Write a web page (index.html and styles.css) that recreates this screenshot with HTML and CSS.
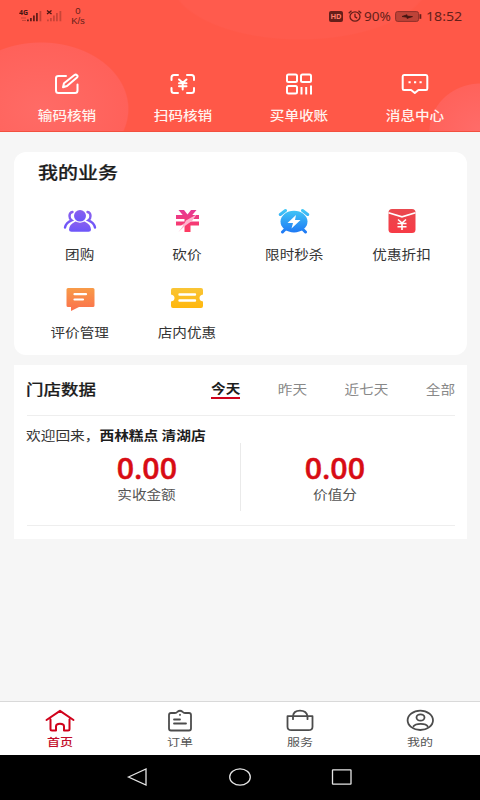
FILE: index.html
```html
<!DOCTYPE html>
<html lang="zh-CN">
<head>
<meta charset="utf-8">
<title>首页</title>
<link rel="stylesheet" href="styles.css">
</head>
<body>
<div class="app">
  <header class="hero">
    <div class="status">
      <svg class="signal" width="44" height="16" viewBox="0 0 44 16">
        <g fill="#651f1a"><path d="M8 11.500h1.800v1.800H8zM11 10h1.800v3.300H11zM14 7.500h1.800v5.800H14zM17 5h1.800v8.300H17z"/><path d="M20.500 3h1.800v10.300h-1.800z" opacity=".4"/></g>
        <g fill="#651f1a" opacity=".35"><path d="M28 11.500h1.800v1.800H28zM31 10h1.800v3.300H31zM34 7.500h1.800v5.800H34zM37 5h1.800v8.300H37zM40.500 3h1.800v10.300h-1.800zM2 9.500h5v1H2zM3 12h4v1H3z"/></g>
        <path d="m28 2.500 4.500 3.500m0-3.500-4.500 3.500" stroke="#451512" stroke-width="1.300"/>
        <text x="0" y="7" class="net">4G</text>
      </svg>
      <div class="speed"><span>0</span><span>K/s</span></div>
      <div class="status-right">
        <span class="hd">HD</span>
        <svg width="14" height="12" viewBox="0 0 14 12" fill="none" stroke="#651f1a" stroke-width="1.300"><ellipse cx="7" cy="6.500" rx="5" ry="4.600"/><path d="M.7 3.300 3.500.8M13.300 3.300 10.500.8M7 3.800v3l2.200 1.300"/></svg>
        <span class="stext pct">90%</span>
        <svg class="battery" width="27" height="11" viewBox="0 0 27 11"><rect x=".6" y=".6" width="23" height="9.800" rx="2" fill="#bd4338" stroke="#8f3029"/><path d="M24.500 3.200h1.800v4.600h-1.800z" fill="#651f1a"/><path d="M7 5.500 12 3.800v1.300l5.500.5-5.500 1.800V6.200z" fill="#451512" stroke="#451512" stroke-width=".8"/></svg>
        <span class="stext clock">18:52</span>
      </div>
    </div>
    <nav class="quick">
      <a><svg width="28" height="24" viewBox="0 0 28 24" fill="none" stroke="#fff" stroke-width="2" stroke-linecap="round" stroke-linejoin="round"><path d="M13 4H5.500Q3 4 3 6v12.500Q3 21 5.500 21H22q2.500 0 2.500-2.500V12.500M10 15.200l1-4L21.500 3q1.300-.8 2.500.2t0 2.300L14 14z"/></svg><span class="t">输码核销</span></a>
      <a><svg width="28" height="24" viewBox="0 0 28 24" fill="none" stroke="#fff" stroke-width="2" stroke-linecap="round" stroke-linejoin="round"><path d="M2.500 8V5.500Q2.500 3 5 3h4M18 3h4.500Q25 3 25 5.500V8M2.500 16v2.500Q2.500 21 5 21h4M18 21h4.500q2.500 0 2.500-2.500V16"/><path d="m10 7.500 3.700 3.200 3.800-3.200M10 11.200h7.500M10 14.200h7.500M13.700 11v6.500"/></svg><span class="t">扫码核销</span></a>
      <a><svg width="28" height="24" viewBox="0 0 28 24" fill="none" stroke="#fff" stroke-width="2"><rect x="2" y="2.500" width="10" height="7.500" rx="1.500"/><rect x="16" y="2.500" width="10" height="7.500" rx="1.500"/><rect x="2" y="14" width="10" height="7.500" rx="1.500"/><path d="M16.500 15v7.500M21.200 15v7.500M26 13.500v9"/></svg><span class="t">买单收账</span></a>
      <a><svg width="28" height="24" viewBox="0 0 28 24" fill="none" stroke="#fff" stroke-width="2" stroke-linejoin="round"><path d="M3 3h22q1.300 0 1.300 1.500v12q0 1.500-1.300 1.500h-7.500l-3.700 3-3.700-3H3q-1.300 0-1.300-1.500v-12Q1.700 3 3 3z"/><path d="M7.500 10.300h2.200M13 10.300h2.200M18.500 10.300h2.200"/></svg><span class="t">消息中心</span></a>
    </nav>
  </header>

  <section class="card services">
    <h2><span class="t">我的业务</span></h2>
    <div class="grid">
      <a><svg width="34" height="26" viewBox="0 0 34 26"><defs><linearGradient id="p" x2="0" y2="1"><stop stop-color="#8a60ee"/><stop offset="1" stop-color="#6c55fa"/></linearGradient></defs><g fill="none" stroke="url(#p)" stroke-width="2.400" stroke-linecap="round"><path d="M9.500 4Q6.500 4.500 6.500 8q0 3 2 4.300Q3 14.500 2 19.500M24.500 4q3 .5 3 4 0 3-2 4.300 5.500 2.200 6.500 7.200"/></g><ellipse cx="17" cy="7.800" rx="6" ry="5.800" fill="url(#p)"/><path d="M12.500 13.500q4.500 2.300 9 0 6.500 3 6.500 8.200 0 2-2.500 2h-17q-2.500 0-2.500-2 0-5.200 6.500-8.200z" fill="url(#p)"/></svg><span class="t">团购</span></a>
      <a><svg width="34" height="26" viewBox="0 0 34 26"><defs><linearGradient id="k" x2="0" y2="1"><stop stop-color="#e63994"/><stop offset="1" stop-color="#ff3b60"/></linearGradient></defs><path d="M8.500 2H14l3.500 4.500L21 2h5.500l-4.200 5H29v4h-9v2.500h9v4h-8.500V24h-6v-6.500H6v-4h8.500V11H6V7h6.700z" fill="url(#k)"/><path d="M26.500 6.500 16 12.500l-2 3.500-5.500 8 7-6.500 7-5z" fill="#ffb3cc"/><path d="M14.500 15 8.500 24l3-6.500z" fill="#fff"/></svg><span class="t">砍价</span></a>
      <a><svg width="34" height="26" viewBox="0 0 34 26"><defs><linearGradient id="b" gradientUnits="userSpaceOnUse" x1="17" y1="0" x2="17" y2="25"><stop stop-color="#43cdf6"/><stop offset="1" stop-color="#1e78f5"/></linearGradient></defs><path d="M3.300 6.500 8.500 2.500M30.700 6.500 25.500 2.500M8 21.500 5.500 24M26 21.500 28.500 24" stroke="url(#b)" stroke-width="3" stroke-linecap="round"/><ellipse cx="17" cy="13.600" rx="13.500" ry="10.800" fill="url(#b)"/><path d="M19 7 10.500 15H16l-1.500 5.500L23.500 12H18z" fill="#fff"/></svg><span class="t">限时秒杀</span></a>
      <a><svg width="34" height="26" viewBox="0 0 34 26"><defs><linearGradient id="r" x2="0" y2="1"><stop stop-color="#e9494f"/><stop offset="1" stop-color="#f73b46"/></linearGradient></defs><rect x="3.500" y="1" width="27" height="24" rx="3.500" fill="url(#r)"/><path d="m3.500 4.800 13.500 4 13.500-4" fill="none" stroke="#fff" stroke-width="1.700"/><path d="m13 11.500 4 3.500 4-3.500M12.500 15.500h9M12.500 18.700h9M17 15V22" fill="none" stroke="#fff" stroke-width="1.600"/></svg><span class="t">优惠折扣</span></a>
      <a><svg width="34" height="26" viewBox="0 0 34 26"><defs><linearGradient id="o" x2="0" y2="1"><stop stop-color="#f89b48"/><stop offset="1" stop-color="#fb704d"/></linearGradient></defs><path d="M5 2h25q1.500 0 1.500 1.500v16Q31.500 21 30 21H16l-8 4V21H5q-1.500 0-1.500-1.500v-16Q3.500 2 5 2z" fill="url(#o)"/><path d="M11.500 8.200h11.500M11.500 13.500h8.500" stroke="#fff" stroke-width="2.200" stroke-linecap="round"/></svg><span class="t">评价管理</span></a>
      <a><svg width="34" height="26" viewBox="0 0 34 26"><defs><linearGradient id="y" x2="0" y2="1"><stop stop-color="#f9c536"/><stop offset="1" stop-color="#ffb70d"/></linearGradient></defs><path d="M3 2h28q2 0 2 2v4.500q-3.500.5-3.500 3.500t3.500 3.500V20q0 2-2 2H3q-2 0-2-2v-4.500q3.500-.5 3.500-3.500T1 8.500V4q0-2 2-2z" fill="url(#y)"/><path d="M9.500 8.500h15.500M9.500 14.500h15.500" stroke="#fff" stroke-width="2.400" stroke-linecap="round"/></svg><span class="t">店内优惠</span></a>
    </div>
  </section>

  <section class="card data">
    <div class="data-head">
      <h3><span class="t">门店数据</span></h3>
      <div class="tabs"><a class="on"><span class="t">今天</span></a><a><span class="t">昨天</span></a><a><span class="t">近七天</span></a><a><span class="t">全部</span></a></div>
    </div>
    <p class="welcome"><span class="t">欢迎回来，<b>西林糕点 清湖店</b></span></p>
    <div class="stats">
      <div class="stat"><strong>0.00</strong><span class="t">实收金额</span></div>
      <div class="stat second"><strong>0.00</strong><span class="t">价值分</span></div>
    </div>
  </section>

  <nav class="tabbar">
    <a class="on"><svg width="30" height="24" viewBox="0 0 30 24" fill="none" stroke="#d0021b" stroke-width="2" stroke-linecap="round" stroke-linejoin="round"><path d="M1.500 11 15 1.800l13.500 9.200M5.500 10.500v9.500Q5.500 21.500 7 21.500h4v-4q0-2.700 4-2.700t4 2.700v4h4q1.500 0 1.500-1.500V10.500"/></svg><span class="t">首页</span></a>
    <a><svg width="30" height="24" viewBox="0 0 30 24" fill="none" stroke="#4c4c4c" stroke-width="1.800" stroke-linecap="round" stroke-linejoin="round"><path d="M10 4H6Q4 4 4 6v13.500q0 2 2 2h18q2 0 2-2V6q0-2-2-2h-4Q18.500 4 17.500 2.700 15 .8 12.500 2.700 11.500 4 10 4zM9 10.500h6M9 14.500h12M15 5.700v.2"/></svg><span class="t">订单</span></a>
    <a><svg width="30" height="24" viewBox="0 0 30 24" fill="none" stroke="#4c4c4c" stroke-width="1.800" stroke-linecap="round" stroke-linejoin="round"><path d="M2.500 7.200h25V17.700q0 3.500-4 3.500h-17q-4 0-4-3.500zM8 10.200V7.200q.5-5.500 7-5.500t7.500 5.500v3"/></svg><span class="t">服务</span></a>
    <a><svg width="30" height="24" viewBox="0 0 30 24" fill="none" stroke="#4c4c4c" stroke-width="1.800" stroke-linecap="round"><ellipse cx="15.300" cy="11.300" rx="12.700" ry="9.700"/><ellipse cx="15.500" cy="8.500" rx="4" ry="3.200"/><path d="M8.500 17.300q1.500-2.500 7.200-2.500t7 2.500"/></svg><span class="t">我的</span></a>
  </nav>
  <footer class="sysnav">
    <svg width="24" height="20" viewBox="0 0 24 20"><path d="M2.500 10 20 2v16z"/></svg>
    <svg width="24" height="20" viewBox="0 0 24 20"><ellipse cx="12" cy="10" rx="10.300" ry="8.200"/></svg>
    <svg width="24" height="20" viewBox="0 0 24 20"><rect x="2.500" y="2.800" width="18.500" height="14.400" rx=".5"/></svg>
  </footer>
</div>
</body>
</html>
```
FILE: styles.css
```css
* { box-sizing: border-box; margin: 0; padding: 0; }
body {
  background: #f6f6f6;
  font-family: "Noto Sans", "Noto Sans CJK SC", sans-serif;
  color: #333;
}
svg { display: block; flex: none; }
.app { width: 480px; height: 800px; display: flex; flex-direction: column; overflow: hidden; }

/* Glyphs are wider than tall throughout the interface */
.t {
  display: block;
  font-family: "Noto Sans CJK SC", sans-serif;
  font-size: 14.6px;
  line-height: 20px;
  white-space: nowrap;
  transform: translateY(-.5px) scaleY(.87);
}

.hero {
  height: 132px;
  flex: none;
  background:
    radial-gradient(ellipse 88px 67px at 41px 109px, #ff6b66 0, #ff615a 98.5%, transparent 100%),
    radial-gradient(ellipse 52px 48px at 481px 131px, #ff6c69 0, #ff625b 98%, transparent 100%),
    radial-gradient(ellipse 130px 60px at 300px -20px, #ff5b4d 98%, transparent 100%),
    #ff5848;
  border-bottom: 1px solid #f2503f;
}
.status { height: 32px; display: flex; padding: 0 17px 0 19px; color: #651f1a; }
.signal { margin-top: 8px; }
.net { font: 700 7px "Noto Sans", sans-serif; fill: #451512; }
.speed {
  display: flex; flex-direction: column; align-items: center;
  margin: 5px 0 0 7px; width: 16px;
  font-family: "Liberation Sans", sans-serif; font-size: 9.500px; line-height: 11px;
}
.speed span:last-child { line-height: 9px; }
.status-right { margin-left: auto; display: flex; align-items: center; }
.hd {
  width: 14px; height: 11px; border-radius: 2px; margin-right: 5px;
  background: #651f1a; color: #ff7d6c;
  font: 700 7.500px/11px "Noto Sans", sans-serif; text-align: center;
}
.stext { font-size: 13px; line-height: 16px; transform-origin: left center; }
.pct { width: 28px; margin-left: 2px; transform: scaleX(1.05); }
.battery { margin: 0 4px 0 3px; }
.clock { width: 37px; transform: scaleX(1.09); }

.quick { display: flex; padding: 40px 7px 0 9px; }
.quick a { width: 116px; display: flex; flex-direction: column; align-items: center; gap: 9px; color: #fff3ef; }
.quick .t { font-weight: 500; }

.card { background: #fff; margin-left: 14px; width: 453px; flex: none; }
.services { margin-top: 20px; height: 203px; border-radius: 12px; padding: 9px 12px 0; }
.services h2 { padding-left: 12px; height: 24px; }
.services h2 .t { width: max-content; font-size: 20px; line-height: 24px; font-weight: 500; color: #1d1d1d; transform: translateY(-1px) scaleY(.83); -webkit-text-stroke: .25px #1d1d1d; }
.grid { display: grid; grid-template-columns: repeat(4, 107.300px); grid-auto-rows: 78px; margin-top: 23px; }
.grid a { display: flex; flex-direction: column; align-items: center; gap: 10px; }

.data { margin-top: 10px; height: 174px; padding: 0 12px 0 13px; }
.data-head { height: 51px; display: flex; justify-content: space-between; border-bottom: 1px solid #eee; }
.data-head h3 { margin: 13px 0 0 -1px; }
.data-head h3 .t { font-size: 17.500px; line-height: 24px; font-weight: 500; color: #1d1d1d; transform: translateY(-.5px) scaleY(.83); -webkit-text-stroke: .25px #1d1d1d; }
.tabs { display: flex; padding-top: 14px; }
.tabs a { margin-left: 37.500px; height: 20px; color: #888; }
.tabs .on { color: #1d1d1d; border-bottom: 2px solid #d0021b; }
.tabs .on .t { font-weight: 600; transform: translateY(-1px) scaleY(.87); }
.welcome { margin: 9px 0 0 -1px; height: 20px; }
.welcome .t { width: max-content; font-size: 14.700px; }
.welcome b { font-weight: 600; color: #1d1d1d; }
.stats { display: flex; margin-top: -2px; height: 83px; border-bottom: 1px solid #eee; }
.stat { height: 68px; width: 215px; display: flex; flex-direction: column; align-items: center; color: #555; }
.stat:first-child { padding-left: 26px; border-right: 1px solid #eaeaea; }
.stat.second { padding-right: 26px; }
.stat strong { font: 600 28px/30px "Open Sans", "Noto Sans", sans-serif; color: #d80c14; margin-top: 10px; transform: scale(1.080, 1); -webkit-text-stroke: .4px #d80c14; }
.stat .t { margin-top: 1px; }

.tabbar { margin-top: auto; height: 54px; flex: none; display: flex; background: #fff; border-top: 1px solid #d9d9d9; padding-top: 7px; }
.tabbar a { width: 120px; display: flex; flex-direction: column; align-items: center; color: #555; }
.tabbar .t { font-size: 13px; line-height: 20px; transform: scaleY(.8); margin-top: -1px; }
.tabbar .on .t { color: #c30d2a; font-weight: 500; }
.sysnav { height: 45px; flex: none; background: #000; display: flex; justify-content: center; gap: 78px; padding-top: 12px; }
.sysnav svg { fill: none; stroke: #e6e6e6; stroke-width: 1.300; }
```
